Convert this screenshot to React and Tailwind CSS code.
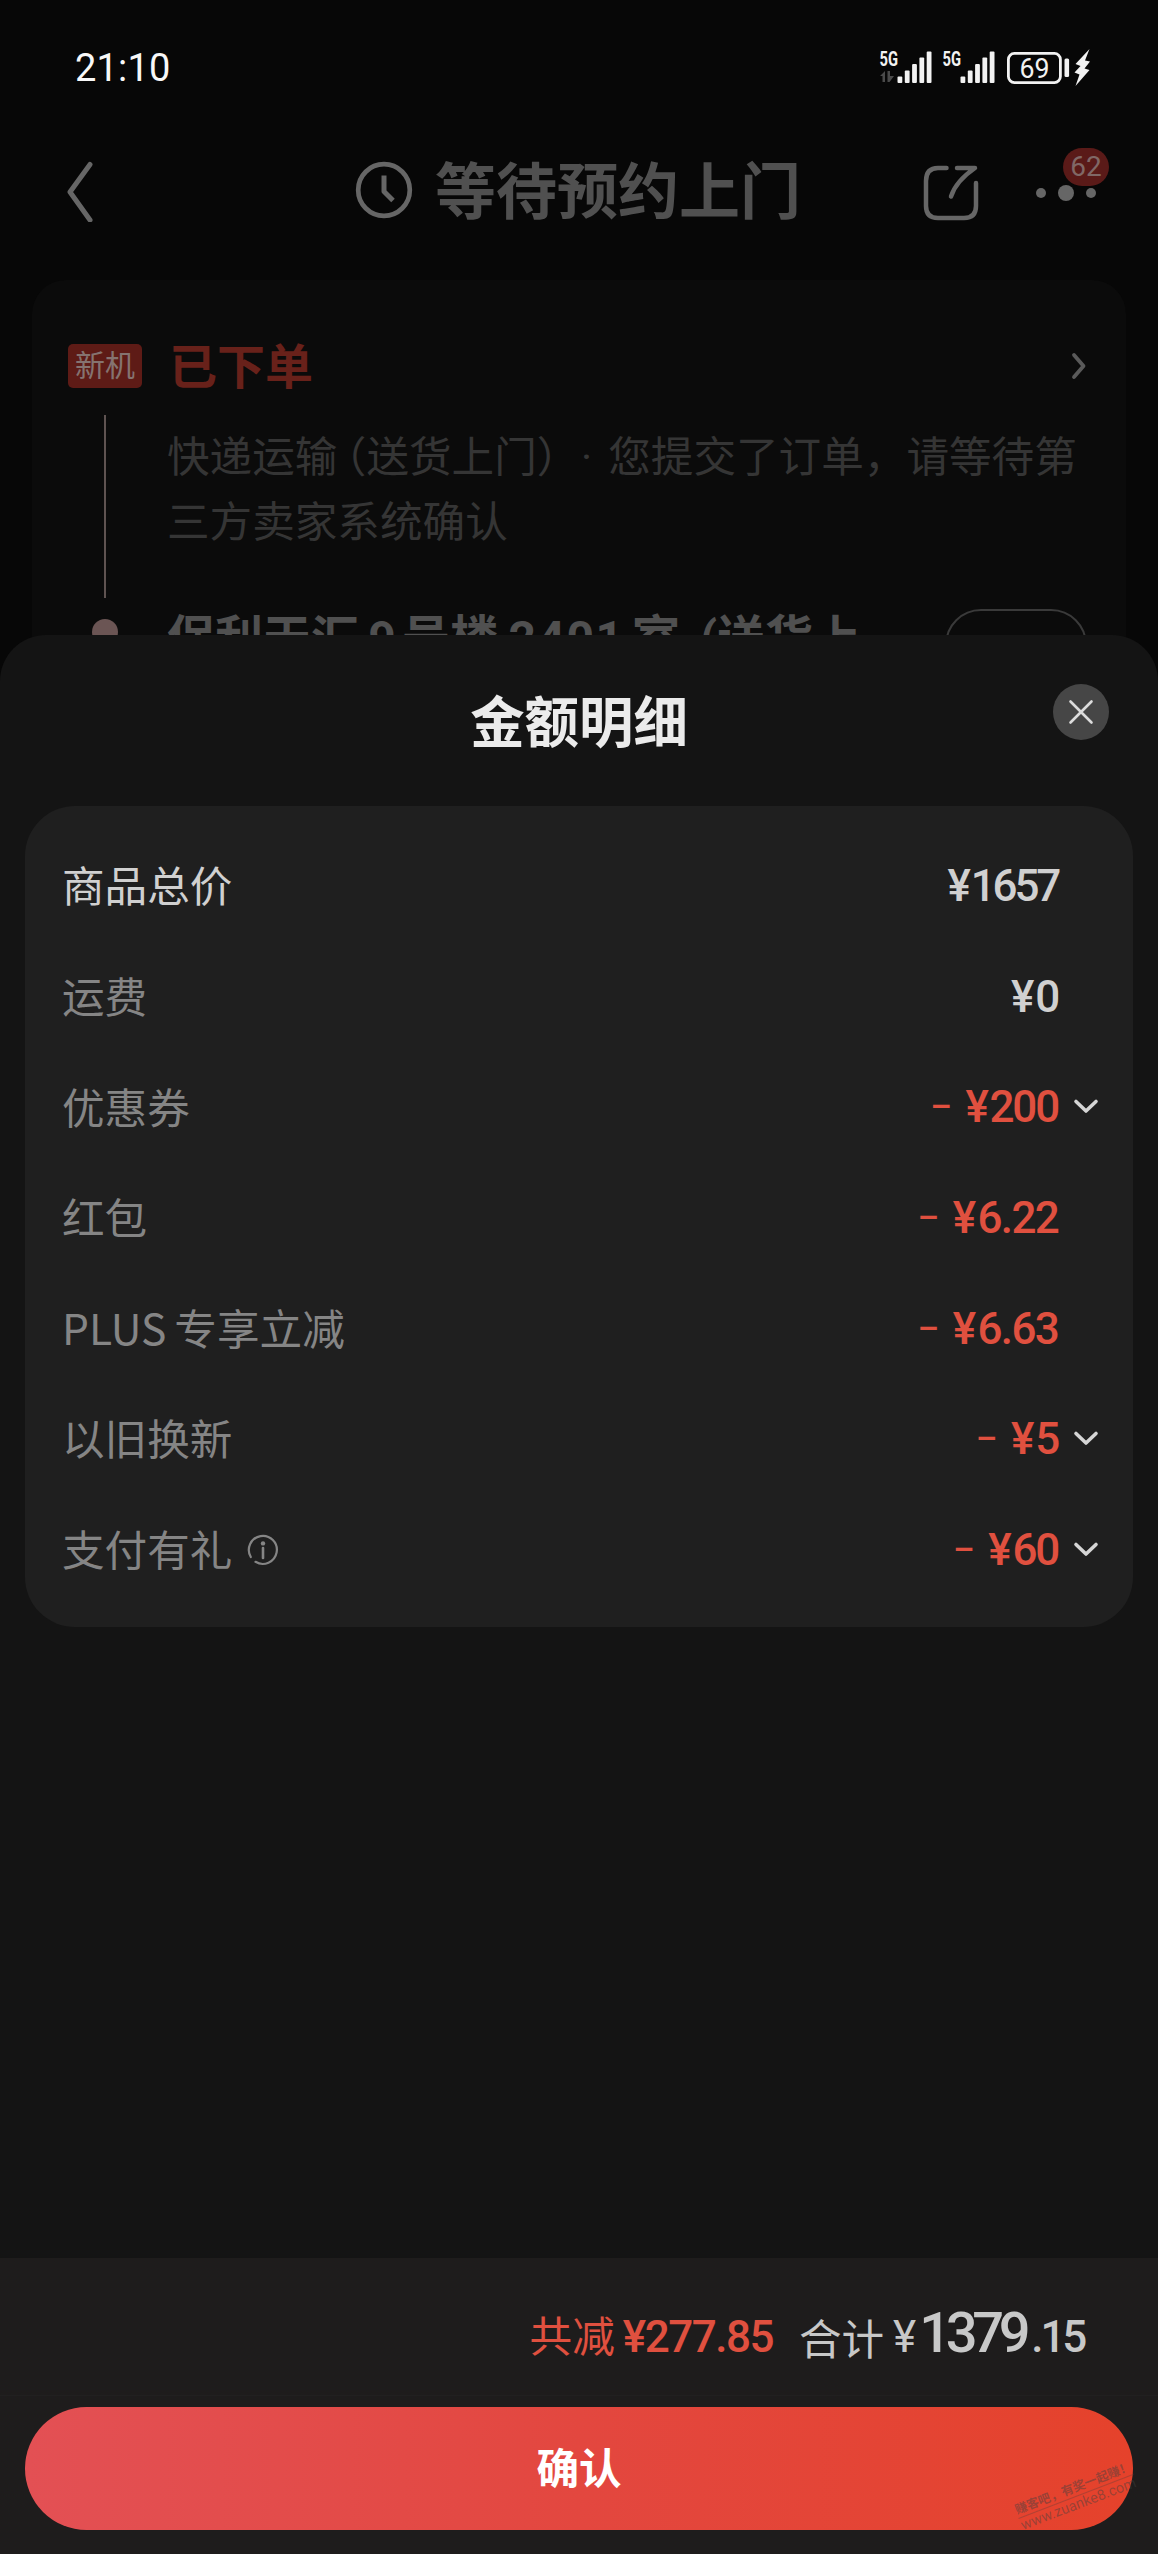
const rows = [
  { label: '商品总价', value: '1657', main: true },
  { label: '运费', value: '0' },
  { label: '优惠券', value: '200', minus: true, more: true },
  { label: '红包', value: '6.22', minus: true },
  { label: '专享立减', prefix: 'PLUS', value: '6.63', minus: true },
  { label: '以旧换新', value: '5', minus: true, more: true },
  { label: '支付有礼', value: '60', minus: true, more: true, info: true },
];

// Status bar
const Signal = ({ data }) => (
  <svg width="54" height="40" viewBox="0 0 54 40" fill="#f2f2f2">
    <text x="0.500" y="17.500" fontSize="20" fontWeight="700" textLength="18.500" lengthAdjust="spacingAndGlyphs">5G</text>
    {data && <path d="M1 28l5-5v11H3.500V28zM8.500 23H11v5h4l-4.500 6h-2z" fill="#4a4a4a" />}
    <rect x="18.500" y="28.500" width="4.800" height="6.500" rx="1" />
    <rect x="25.800" y="22.500" width="4.800" height="12.500" rx="1" />
    <rect x="33.100" y="16" width="4.800" height="19" rx="1" />
    <rect x="40.400" y="9.500" width="4.800" height="25.500" rx="1" />
    <rect x="47.700" y="3.500" width="4.800" height="31.500" rx="1" />
  </svg>
);

const Battery = () => (
  <svg width="86" height="40" viewBox="0 0 86 40" fill="#f2f2f2">
    <rect x="2.400" y="5.400" width="52" height="29.200" rx="6" fill="none" stroke="#f2f2f2" strokeWidth="2.800" />
    <text x="13.500" y="30" fontSize="27" textLength="30" lengthAdjust="spacingAndGlyphs">69</text>
    <rect x="58.500" y="10.500" width="4.600" height="18.500" rx="1.500" />
    <path d="M83.500 1L69.500 16l5 2-6 6.500 5 2L69.500 38l14-16-5-1.500 5.500-7-5-1z" />
  </svg>
);

const StatusBar = () => (
  <div className="flex h-[134px] items-start justify-between pl-[75px] pr-[66px] pt-[48px]">
    <span className="text-[38px] leading-10 tracking-[0.200px] text-[#f8f8f8]">21:10</span>
    <div className="flex items-start">
      <Signal data />
      <div className="w-[9px]"></div>
      <Signal />
      <div className="w-[10px]"></div>
      <Battery />
    </div>
  </div>
);

// Header
const Header = () => (
  <div className="flex h-[112px] items-center pl-[62px] text-[#666]">
    <svg width="34" height="64" viewBox="0 0 34 64" fill="none" stroke="currentColor" strokeWidth="5" strokeLinecap="round" strokeLinejoin="round">
      <path d="M28 6.500L8 34l20 28" />
    </svg>
    <svg className="ml-[257px]" width="62" height="62" viewBox="0 0 62 62" fill="none" stroke="currentColor" strokeWidth="4.700" strokeLinejoin="round">
      <circle cx="31" cy="31" r="25.800" />
      <path d="M31 16.500v16l9 9" strokeWidth="5" />
    </svg>
    <h1 className="ml-[20px] mt-[5px] w-[366px] whitespace-nowrap text-[61px] font-bold leading-[80px] text-[#505050]">等待预约上门</h1>
    <svg className="ml-[119px] mt-[6px]" width="60" height="60" viewBox="0 0 60 60" fill="none" stroke="currentColor" strokeWidth="4.500" strokeLinecap="round" strokeLinejoin="round">
      <path d="M26.500 5H18Q6 5 6 18v25q0 12 12 12h26q12 0 12-12V20" />
      <path d="M37 5h18Q36 18 31 33.500" />
    </svg>
    <div className="relative ml-[56px] mt-[6px] flex items-center gap-[12px]">
      <i className="size-[10px] rounded-full bg-[#666]"></i>
      <i className="size-[16px] rounded-full bg-[#666]"></i>
      <i className="size-[10px] rounded-full bg-[#666]"></i>
      <span className="absolute left-[27px] top-[-37px] h-[38px] w-[46px] rounded-full bg-[#5a1a18] text-center text-[28px] leading-[38px] text-[#806866]">62</span>
    </div>
  </div>
);

// Order progress card
const OrderCard = () => (
  <div className="mx-[32px] mt-[34px] h-[400px] rounded-t-[34px] bg-[#0b0b0b] pl-[36px] pt-[58px]">
    <div className="flex h-[56px] items-center">
      <span className="h-[44px] w-[74px] rounded-[5px] bg-[#5e1b16] text-center text-[30px] leading-[43px] text-[#857370]">新机</span>
      <span className="ml-[27px] mt-[4px] text-[48px] font-bold leading-[56px] text-[#68211a]">已下单</span>
      <svg className="ml-[757px]" width="20" height="30" viewBox="0 0 20 30" fill="none" stroke="#5a5a5a" strokeWidth="3.800" strokeLinecap="round" strokeLinejoin="round">
        <path d="M4 4l9.500 11L4 26" />
      </svg>
    </div>
    <div className="flex">
      <div className="flex w-[74px] flex-col items-center pt-[21px]">
        <div className="h-[183px] w-[2px] bg-[#5f5351]"></div>
        <div className="mt-[21px] size-[26px] rounded-full bg-[#6b5554]"></div>
      </div>
      <div className="ml-[25px] pt-[31px]">
        <div className="whitespace-nowrap text-[42.600px] leading-[65px] text-[#353535]">
          <div>
            快递运输<span className="inline-block w-[29px] text-right [font-feature-settings:'halt']">（</span>送货上门<span className="inline-block w-[28px] [font-feature-settings:'halt']">）</span><span className="inline-block w-[43.500px] text-center">·</span>您提交了订单，请等待第
          </div>
          <div>三方卖家系统确认</div>
        </div>
        <div className="mt-[53px] flex items-start">
          <div className="w-[778px] whitespace-nowrap pt-px text-[48px] font-bold leading-[60px] text-[#505050]">
            保利天汇<span className="inline-block w-[43px] pl-[3px] text-center">9</span>号楼<span className="inline-block w-[134px] pl-[3px] text-center tracking-[1.500px]">2401</span>室<span className="inline-block w-[37px] text-right">(</span>送货上
          </div>
          <div className="mt-px h-[72px] w-[142px] rounded-full border-2 border-[#3a3a3a]"></div>
        </div>
      </div>
    </div>
  </div>
);

const labelClass = (row) => {
  if (row.main) return 'flex items-center pt-[6px] text-[42.600px] text-[#d0d0d0]';
  if (row.prefix) return 'flex items-center pt-[2px] text-[42.600px] text-[#858585]';
  return 'flex items-center pt-[6px] text-[42.600px] text-[#858585]';
};

const valueClass = (row) => {
  if (row.main) return 'text-[44px] font-medium leading-[50px] tracking-[-3.200px]';
  if (row.value.includes('.')) return 'text-[44px] font-medium leading-[50px] tracking-[-1.700px]';
  return 'text-[44px] font-medium leading-[50px] tracking-[-2.200px]';
};

const Row = ({ row }) => (
  <div className="flex h-[110.600px] items-center">
    <div className={labelClass(row)}>
      <span>
        {row.prefix && <span className="mr-[8px] font-['Noto_Sans_CJK_SC']">{row.prefix}</span>}
        {row.label}
      </span>
      {row.info && (
        <svg className="-mt-[3px] ml-[14px]" width="34" height="34" viewBox="0 0 34 34" fill="none" stroke="#858585" strokeWidth="2.200" strokeLinecap="round">
          <path d="M9.500 28.800A14 14 0 1 0 4.800 24" />
          <path d="M17 15v10" strokeWidth="2.600" />
          <circle cx="17" cy="10.400" r="2.200" fill="#858585" stroke="none" />
        </svg>
      )}
    </div>
    <div className={row.minus ? 'ml-auto flex items-center pt-[2px] text-[#e0503f]' : 'ml-auto flex items-center pt-[2px] text-[#d0d0d0]'}>
      {row.minus && <span className="mr-[18px] w-[17px] text-[33px] font-medium leading-[50px]">–</span>}
      <span className={valueClass(row)}>
        <span className="mr-[3px]">¥</span>{row.value}
      </span>
    </div>
    <div className="flex w-[75px] justify-start pl-[14px] pt-[2px]">
      {row.more && (
        <svg width="28" height="20" viewBox="0 0 28 20" fill="none" stroke="#d5d5d5" strokeWidth="3.600" strokeLinecap="round" strokeLinejoin="round">
          <path d="M4 4.500l10 9.500 10-9.500" />
        </svg>
      )}
    </div>
  </div>
);

const Footer = () => (
  <div className="h-[296px] bg-[#1e1c1c]">
    <div className="flex h-[137px] items-baseline justify-end whitespace-nowrap pr-[74px] pt-[45px] text-[42.600px] leading-[60px]">
      <span className="text-[#e0503f]">共减</span>
      <span className="ml-[8px] text-[44px] font-medium tracking-[-1.500px] text-[#e0503f]">¥277.85</span>
      <span className="ml-[26px] translate-y-[3px] text-[#c8c8c8]">合计</span>
      <span className="ml-[9px] text-[44px] tracking-[-1px] text-[#c8c8c8]">¥</span>
      <span className="ml-[4px] text-[56px] font-medium tracking-[-5.300px] text-[#c8c8c8]">1379</span>
      <span className="ml-[6px] text-[44px] font-medium tracking-[-3.200px] text-[#c8c8c8]">.15</span>
    </div>
    <div className="border-t border-[#212020] px-[25px] pt-[11px]">
      <button className="relative block h-[123px] w-full rounded-full bg-linear-to-r from-[#e35054] via-[#e3473f] to-[#e5422b] pt-[2px] text-[42.600px] font-bold text-white">
        确认
        <div className="absolute left-[988px] top-[97px] w-[124px] origin-top-left -rotate-[21deg] text-left text-[12.400px] leading-[14px] text-[#404040]/45">
          <div className="whitespace-nowrap border-b border-[#404040]/30 pb-px">赚客吧，有奖一起赚！</div>
          <div className="whitespace-nowrap pt-px text-[14.500px] font-normal">www.zuanke8.com</div>
        </div>
      </button>
    </div>
  </div>
);

export default function App() {
  return (
    <div className="relative h-[2554px] w-[1158px] overflow-hidden bg-[#070707] font-[Roboto,'Noto_Sans_CJK_SC',sans-serif]">
      <StatusBar />
      <Header />
      <OrderCard />

      {/* Amount details sheet */}
      <div className="absolute inset-x-0 bottom-0 top-[635px] flex flex-col rounded-t-[46px] bg-[#141414]">
        <div className="relative flex h-[171px] items-start justify-center pt-[49px]">
          <h2 className="text-[54.400px] font-bold leading-[80px] text-[#ebebeb]">金额明细</h2>
          <div className="absolute right-[49px] top-[49px] flex size-[56px] items-center justify-center rounded-full bg-[#464646]">
            <svg width="28" height="28" viewBox="0 0 28 28" fill="none" stroke="#dcdcdc" strokeWidth="2.600" strokeLinecap="round">
              <path d="M3.500 3.500l21 21M24.500 3.500l-21 21" />
            </svg>
          </div>
        </div>
        <div className="mx-[25px] h-[821px] rounded-[50px] bg-[#1f1f1f] pl-[37px] pt-[24px]">
          {rows.map((row) => (
            <Row key={row.label} row={row} />
          ))}
        </div>
        <div className="flex-1"></div>
        <Footer />
      </div>
    </div>
  );
}
